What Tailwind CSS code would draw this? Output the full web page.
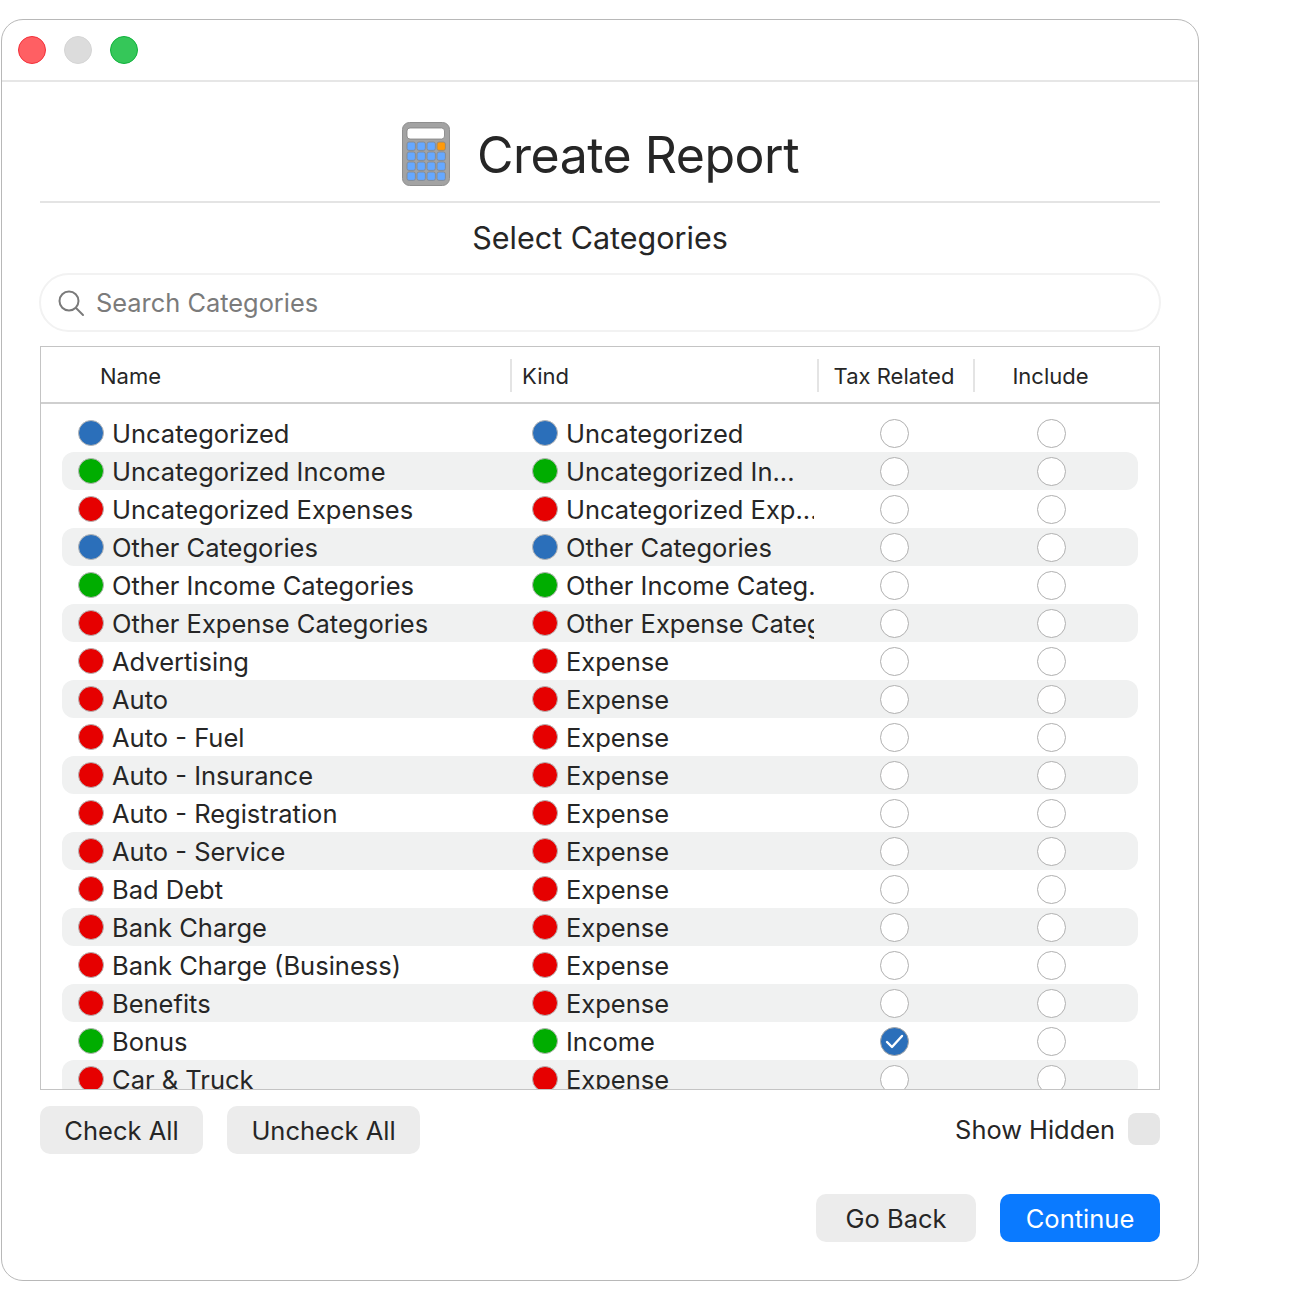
<!DOCTYPE html>
<html lang="en">
<head>
<meta charset="UTF-8" />
<title>Create Report</title>
<script src="https://cdn.jsdelivr.net/npm/@tailwindcss/browser@4"></script>
</head>
<body class="bg-white font-['Inter',sans-serif] text-[#262626]">
<div class="pt-[19px] pl-[1px]">
  <div class="w-[1198px] h-[1262px] bg-white border border-[#b8b8b8] rounded-[22px] overflow-hidden">

    <!-- Title bar -->
    <div class="h-[62px] border-b-2 border-[#e6e6e6] flex items-center pl-[16px] gap-[18px]">
      <div class="w-[28px] h-[28px] rounded-full bg-[#ff5f63] border border-[#f2303a]"></div>
      <div class="w-[28px] h-[28px] rounded-full bg-[#dcdcdc] border border-[#d4d4d4]"></div>
      <div class="w-[28px] h-[28px] rounded-full bg-[#35c759] border border-[#0fb23c]"></div>
    </div>

    <div class="px-[38px]">
      <!-- Heading -->
      <div class="h-[121px] border-b-2 border-[#e4e4e4] flex items-center justify-center gap-[27px] pt-[26px]">
        <svg class="-mt-[2px] ml-[1px]" width="48" height="64" viewBox="0 0 48 64">
          <rect x="0.5" y="0.5" width="47" height="63" rx="7" fill="#a3a3a3" stroke="#8f8f8f" />
          <rect x="5" y="6" width="37.5" height="11" rx="3" fill="#fff" stroke="#808080" stroke-width="0.8" />
          <g fill="#66a8ff" stroke="#868686" stroke-width="0.8">
            <rect x="5" y="20" width="8.4" height="8.4" rx="2" /><rect x="15" y="20" width="8.4" height="8.4" rx="2" /><rect x="25" y="20" width="8.4" height="8.4" rx="2" /><rect x="35" y="20" width="8.4" height="8.4" fill="#ff9a0a" rx="2" />
            <rect x="5" y="30" width="8.4" height="8.4" rx="2" /><rect x="15" y="30" width="8.4" height="8.4" rx="2" /><rect x="25" y="30" width="8.4" height="8.4" rx="2" /><rect x="35" y="30" width="8.4" height="8.4" rx="2" />
            <rect x="5" y="40" width="8.4" height="8.4" rx="2" /><rect x="15" y="40" width="8.4" height="8.4" rx="2" /><rect x="25" y="40" width="8.4" height="8.4" rx="2" /><rect x="35" y="40" width="8.4" height="8.4" rx="2" />
            <rect x="5" y="50" width="8.4" height="8.4" rx="2" /><rect x="15" y="50" width="8.4" height="8.4" rx="2" /><rect x="25" y="50" width="8.4" height="8.4" rx="2" /><rect x="35" y="50" width="8.4" height="8.4" rx="2" />
          </g>
        </svg>
        <h1 class="text-[50px] leading-none font-normal tracking-[-0.5px]">Create Report</h1>
      </div>

      <h2 class="h-[70px] pt-[1px] flex items-center justify-center text-[30.5px] leading-none font-normal">Select Categories</h2>

      <!-- Search -->
      <div class="h-[59px] mb-[14px] -mx-[1px] rounded-full border-2 border-[#f2f2f2] flex items-center pl-[16px] gap-[11px]">
        <svg width="28" height="28" viewBox="0 0 28 28" fill="none" stroke="#7a7a7a" stroke-width="2" stroke-linecap="round">
          <circle cx="12" cy="12" r="9.5" /><path d="M19 19l7 7" />
        </svg>
        <span class="text-[25.4px] text-[#7b7b7b] pt-[1px]">Search Categories</span>
      </div>

      <!-- Table -->
      <div class="h-[744px] border border-[#c4c4c4] overflow-hidden">
        <div class="h-[57px] pt-[2px] border-b-2 border-[#cfcfcf] flex items-center text-[22px]">
          <div class="w-[469px] pl-[59px] pt-[1px]">Name</div>
          <div class="w-[2px] h-[33px] bg-[#e4e4e4]"></div>
          <div class="w-[305px] pl-[10px] pt-[1px]">Kind</div>
          <div class="w-[2px] h-[33px] bg-[#e4e4e4]"></div>
          <div class="w-[154px] pr-[4px] pt-[1px] text-center">Tax Related</div>
          <div class="w-[2px] h-[33px] bg-[#e4e4e4]"></div>
          <div class="w-[153px] pr-[2px] pt-[1px] text-center">Include</div>
        </div>
        <div id="rows" class="pt-[10px] pl-[21px]"></div>
      </div>

      <!-- Table actions -->
      <div class="flex items-start mt-[16px] gap-[24px]">
        <button class="w-[163px] h-[48px] pt-[2px] rounded-[10px] bg-[#ececec] text-[25.5px]">Check All</button>
        <button class="w-[193px] h-[48px] pt-[2px] rounded-[10px] bg-[#ececec] text-[25.5px]">Uncheck All</button>
        <div class="ml-auto flex items-center gap-[13px] mt-[6px]">
          <span class="text-[25.4px] -mt-[1px]">Show Hidden</span>
          <div class="w-[32px] h-[32px] -mt-[3px] rounded-[8px] bg-[#e6e6e6]"></div>
        </div>
      </div>

      <div class="flex justify-end gap-[24px] mt-[40px]">
        <button class="w-[160px] h-[48px] pt-[2px] rounded-[10px] bg-[#ececec] text-[25.5px]">Go Back</button>
        <button class="w-[160px] h-[48px] pt-[2px] rounded-[10px] bg-[#0a7aff] text-white text-[25.5px]">Continue</button>
      </div>
    </div>
  </div>
</div>

<script>
  const dotClass = {
    blue: 'bg-[#2b6fba]',
    green: 'bg-[#00ad00]',
    red: 'bg-[#e60000]'
  };
  const data = [
    ['Uncategorized', 'Uncategorized', 'blue'],
    ['Uncategorized Income', 'Uncategorized In...', 'green'],
    ['Uncategorized Expenses', 'Uncategorized Exp...', 'red'],
    ['Other Categories', 'Other Categories', 'blue'],
    ['Other Income Categories', 'Other Income Categ...', 'green'],
    ['Other Expense Categories', 'Other Expense Categories', 'red'],
    ['Advertising', 'Expense', 'red'],
    ['Auto', 'Expense', 'red'],
    ['Auto - Fuel', 'Expense', 'red'],
    ['Auto - Insurance', 'Expense', 'red'],
    ['Auto - Registration', 'Expense', 'red'],
    ['Auto - Service', 'Expense', 'red'],
    ['Bad Debt', 'Expense', 'red'],
    ['Bank Charge', 'Expense', 'red'],
    ['Bank Charge (Business)', 'Expense', 'red'],
    ['Benefits', 'Expense', 'red'],
    ['Bonus', 'Income', 'green'],
    ['Car & Truck', 'Expense', 'red']
  ];

  function dot(color) {
    return `<span class="w-[26px] h-[26px] shrink-0 rounded-full border border-[#b5b5b5] ${dotClass[color]}"></span>`;
  }

  function radio(checked) {
    if (checked) {
      return `<span class="w-[29px] h-[29px] rounded-full border border-[#a8a8a8] bg-[#2b6fba] flex items-center justify-center">
        <svg width="19" height="15" viewBox="0 0 19 15" fill="none" stroke="#fff" stroke-width="2.4" stroke-linecap="round" stroke-linejoin="round"><path d="M2 8l5 5L17 2" /></svg>
      </span>`;
    }
    return '<span class="w-[29px] h-[29px] rounded-full border border-[#b0b0b0] bg-white"></span>';
  }

  const rows = document.getElementById('rows');
  data.forEach((row, i) => {
    const stripe = i % 2 === 1 ? 'bg-[#f0f1f1]' : '';
    rows.insertAdjacentHTML('beforeend', `
      <div class="w-[1076px] h-[38px] shrink-0 flex items-center rounded-[12px] text-[25.5px] ${stripe}">
        <div class="w-[470px] pl-[16px] flex items-center gap-[8px] whitespace-nowrap">${dot(row[2])}<span class="pt-[2px]">${row[0].replace('&', '&amp;')}</span></div>
        <div class="w-[282px] flex items-center gap-[8px] whitespace-nowrap overflow-hidden">${dot(row[2])}<span class="pt-[2px]">${row[1]}</span></div>
        <div class="w-[161px] flex justify-center">${radio(row[0] === 'Bonus')}</div>
        <div class="w-[152px] flex justify-center">${radio(false)}</div>
      </div>`);
  });
</script>
</body>
</html>
